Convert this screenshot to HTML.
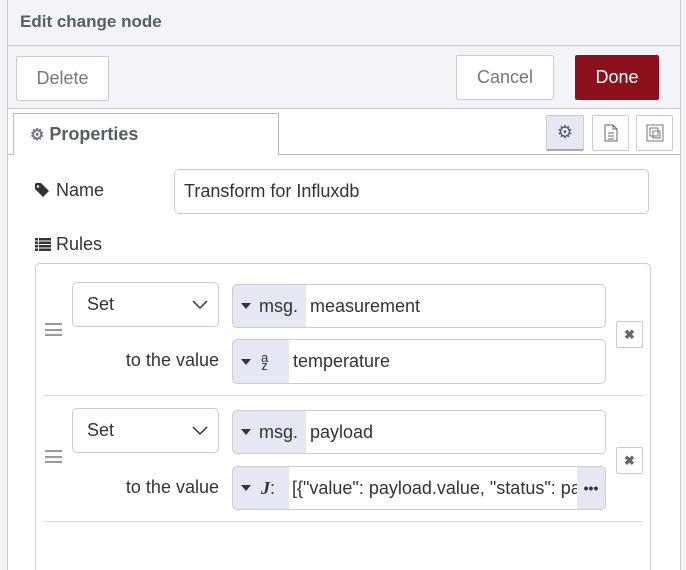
<!DOCTYPE html>
<html><head><style>
html,body{margin:0;width:686px;height:570px;overflow:hidden}
body{background:#f3f3fa;font-family:"Liberation Sans",sans-serif;position:relative;color:#333}
.a{position:absolute;box-sizing:border-box}
.btn{background:#fff;border:1px solid #ccc;border-radius:2px;color:#777;font-size:18px;display:flex;align-items:center;justify-content:center}
.in{background:#fff;border:1px solid #ccc;border-radius:5px;font-size:18px;display:flex;align-items:center;overflow:hidden}
.tp{box-sizing:border-box;background:#e5e7f3;height:100%;display:flex;align-items:center;padding-left:8px;white-space:nowrap;flex:none}
.ar{display:inline-block;width:0;height:0;border-left:5px solid transparent;border-right:5px solid transparent;border-top:6px solid #333;margin-right:8px}
.xb{width:27px;height:27px;border:1px solid #ccc;border-radius:2px;background:#fff;color:#666;font-size:13px;font-weight:bold;display:flex;align-items:center;justify-content:center}
.lbl{font-size:18px;color:#333}
</style></head><body>
<div class="a" style="left:7px;top:0;width:674px;height:570px;border-left:1px solid #ccc;border-right:1px solid #ccc;background:#f3f3fa"></div>
<div class="a" style="left:20px;top:12px;font-size:17px;font-weight:bold;color:#555f62">Edit change node</div>
<div class="a" style="left:8px;top:45px;width:672px;height:1px;background:#ccc"></div>
<div class="a btn" style="left:16px;top:56px;width:93px;height:45px">Delete</div>
<div class="a btn" style="left:456px;top:55px;width:98px;height:45px">Cancel</div>
<div class="a btn" style="left:575px;top:55px;width:84px;height:45px;background:#8c101c;border-color:#8c101c;color:#fff">Done</div>
<div class="a" style="left:8px;top:108px;width:672px;height:462px;background:#fff;border-top:1px solid #ccc"></div>
<div class="a" style="left:8px;top:154px;width:672px;height:1px;background:#bbb"></div>
<div class="a" style="left:13px;top:113px;width:266px;height:42px;border:1px solid #bbb;border-bottom:none;background:#fff;font-size:18px;font-weight:bold;color:#555f62;padding:10px 0 0 16px">
<span style="color:#778;font-size:16px">⚙</span> Properties</div>
<div class="a btn" style="left:546px;top:115px;width:38px;height:36px;background:#e5e7f3;border-bottom:2px solid #aaa;color:#555f62;font-size:18px">⚙</div>
<div class="a btn" style="left:592px;top:115px;width:37px;height:36px">
<svg width="14" height="18" viewBox="0 0 14 18"><path d="M1 1h8l4 4v12H1z M9 1v4h4 M4 9h6 M4 12h6 M4 15h6" fill="none" stroke="#666" stroke-width="1"/></svg></div>
<div class="a btn" style="left:636px;top:115px;width:37px;height:36px">
<svg width="20" height="20" viewBox="0 0 20 20"><rect x="2" y="2" width="16" height="16" fill="none" stroke="#777"/><rect x="5" y="5" width="8" height="8" fill="none" stroke="#777"/><rect x="8" y="8" width="7" height="7" fill="none" stroke="#777"/></svg></div>
<div class="a lbl" style="left:35px;top:180px">
<svg width="16" height="14" viewBox="0 0 16 14" style="vertical-align:-1px"><path d="M0 1v5l8 8 6-6-8-8H1z" fill="#333"/><circle cx="3" cy="3.5" r="1.2" fill="#fff"/></svg> Name</div>
<div class="a in" style="left:174px;top:169px;width:475px;height:45px;padding-left:9px">Transform for Influxdb</div>
<div class="a lbl" style="left:35px;top:234px">
<svg width="16" height="13" viewBox="0 0 16 13" style="vertical-align:-1px"><g fill="#333"><rect x="0" y="0" width="3" height="2.5"/><rect x="4" y="0" width="12" height="2.5"/><rect x="0" y="3.5" width="3" height="2.5"/><rect x="4" y="3.5" width="12" height="2.5"/><rect x="0" y="7" width="3" height="2.5"/><rect x="4" y="7" width="12" height="2.5"/><rect x="0" y="10.5" width="3" height="2.5"/><rect x="4" y="10.5" width="12" height="2.5"/></g></svg> Rules</div>
<div class="a" style="left:35px;top:263px;width:616px;height:320px;border:1px solid #ccc;border-radius:5px"></div>
<div class="a" style="left:43px;top:395px;width:600px;height:1px;background:#ddd"></div>
<div class="a" style="left:43px;top:521px;width:600px;height:1px;background:#ddd"></div>

<div class="a" style="left:45px;top:323px;width:17px;height:13px;border-top:2px solid #999;border-bottom:2px solid #999"><div style="margin-top:3.5px;height:2px;background:#999"></div></div>
<div class="a in" style="left:72px;top:282px;width:147px;height:45px;padding-left:14px;justify-content:space-between;padding-right:10px">Set<svg width="16" height="10" viewBox="0 0 16 10"><path d="M1 1l7 7 7-7" fill="none" stroke="#333" stroke-width="1.5"/></svg></div>
<div class="a in" style="left:232px;top:284px;width:374px;height:44px"><div class="tp" style="width:73px"><span class="ar"></span>msg.</div><span style="padding-left:4px">measurement</span></div>
<div class="a lbl" style="left:100px;top:350px;width:119px;text-align:right">to the value</div>
<div class="a in" style="left:232px;top:339px;width:374px;height:45px"><div class="tp" style="width:56px"><span class="ar" style="margin-right:10px"></span><span style="font-size:13px;position:relative;top:-4px">a</span><span style="font-size:13px;position:relative;top:4px;left:-7px">z</span></div><span style="padding-left:4px">temperature</span></div>
<div class="a xb" style="left:616px;top:321px">✖</div>

<div class="a" style="left:45px;top:450px;width:17px;height:13px;border-top:2px solid #999;border-bottom:2px solid #999"><div style="margin-top:3.5px;height:2px;background:#999"></div></div>
<div class="a in" style="left:72px;top:408px;width:147px;height:45px;padding-left:14px;justify-content:space-between;padding-right:10px">Set<svg width="16" height="10" viewBox="0 0 16 10"><path d="M1 1l7 7 7-7" fill="none" stroke="#333" stroke-width="1.5"/></svg></div>
<div class="a in" style="left:232px;top:410px;width:374px;height:44px"><div class="tp" style="width:73px"><span class="ar"></span>msg.</div><span style="padding-left:4px">payload</span></div>
<div class="a lbl" style="left:100px;top:477px;width:119px;text-align:right">to the value</div>
<div class="a in" style="left:232px;top:466px;width:374px;height:44px"><div class="tp" style="width:56px"><span class="ar" style="margin-right:10px"></span><b style="font-family:'Liberation Serif',serif;font-style:italic">J</b>:</div><span style="padding-left:3px;white-space:nowrap;flex:1;overflow:hidden">[{"value": payload.value, "status": payload</span><div style="width:28px;height:100%;background:#e5e7f3;flex:none;display:flex;align-items:center;justify-content:center;font-weight:bold;font-size:14px;color:#333">•••</div></div>
<div class="a xb" style="left:616px;top:447px">✖</div>
</body></html>
